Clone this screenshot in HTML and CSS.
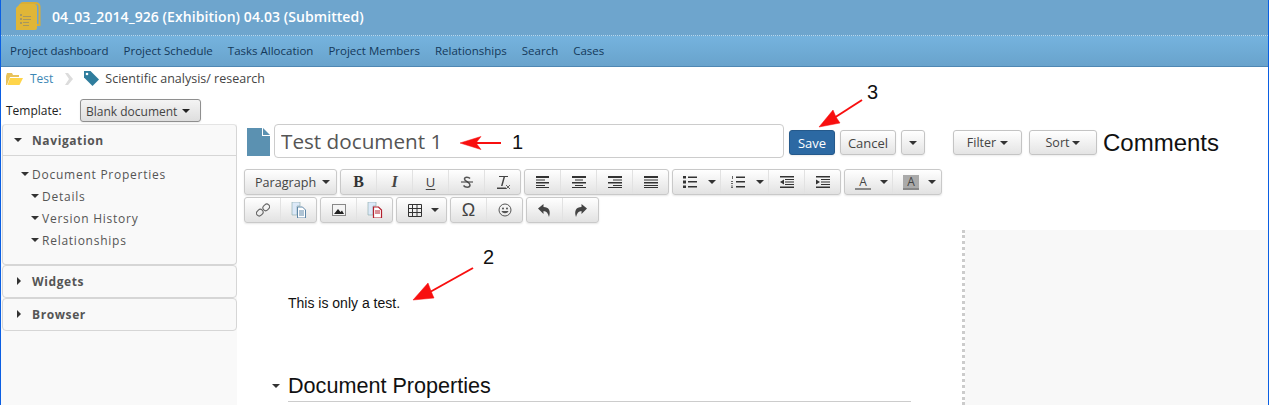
FILE: index.html
```html
<!DOCTYPE html>
<html lang="en">
<head>
<meta charset="utf-8">
<title>Test document 1</title>
<link rel="stylesheet" href="styles.css">
</head>
<body>
<div class="app">
  <header class="head">
    <svg class="logo" width="26" height="30" viewBox="0 0 26 30">
      <path d="M6 3.500 Q6 2 8 2 H20 Q24.500 2 24.500 6 V24 H22" fill="none" stroke="#d9ae35" stroke-width="2"/>
      <path d="M4 5 Q4 4 5 4 H19 Q22 4 22 7 V28 Q22 30 20 30 H6 L1 30 V8 Z" transform="translate(0 -1)" fill="#e0b637"/>
      <path d="M5 13h2v2h-2zM5 17h2v2h-2zM5 21h2v2h-2zM8 15h8v1h-8zM8 18h8v1h-8zM8 21h6v1h-6zM8 24h6v1h-6z" fill="#a8975e"/>
    </svg>
    <span class="head-title">04_03_2014_926 (Exhibition) 04.03 (Submitted)</span>
  </header>
  <nav class="menu">
    <a>Project dashboard</a><a>Project Schedule</a><a>Tasks Allocation</a><a>Project Members</a><a>Relationships</a><a>Search</a><a>Cases</a>
  </nav>
  <div class="crumbs">
    <svg width="17" height="12" viewBox="0 0 17 12"><path d="M0 3 L1 0 H6 L7 2 H13 V4 H4 L1 12 H0 Z" fill="#e8c25a"/><path d="M4 5 H17 L13.500 12 H1.500 Z" fill="#ffd54a"/></svg>
    <a class="crumb-link">Test</a>
    <svg class="crumb-sep" width="9" height="12" viewBox="0 0 9 12"><path d="M1 0 H4 L9 6 L4 12 H1 L5 6 Z" fill="#dcdcdc"/></svg>
    <svg width="15" height="15" viewBox="0 0 15 15"><path d="M0 0 H6.500 L15 8.500 L8.500 15 L0 6.500 Z" fill="#2f7d9d"/><circle cx="3" cy="3" r="1.300" fill="#fff"/></svg>
    <span class="crumb-text">Scientific analysis/ research</span>
  </div>
  <div class="template-row">
    <span class="template-label">Template:</span>
    <button class="btn btn-template">Blank document <i class="caret"></i></button>
  </div>
  <div class="body">
    <aside class="side">
      <section class="panel panel-nav">
        <h3 class="panel-head panel-head-line"><i class="caret caret-dark"></i>Navigation</h3>
        <ul class="tree">
          <li class="tree-root"><i class="caret caret-dark"></i>Document Properties</li>
          <li class="tree-child"><i class="caret caret-dark"></i>Details</li>
          <li class="tree-child"><i class="caret caret-dark"></i>Version History</li>
          <li class="tree-child"><i class="caret caret-dark"></i>Relationships</li>
        </ul>
      </section>
      <section class="panel"><h3 class="panel-head"><i class="caret-right"></i>Widgets</h3></section>
      <section class="panel panel-last"><h3 class="panel-head"><i class="caret-right"></i>Browser</h3></section>
    </aside>
    <main class="main">
      <div class="title-row">
        <svg class="doc-icon" width="23" height="28" viewBox="0 0 23 28"><path d="M0 0 H15 V8 H23 V28 H0 Z" fill="#5b91b1"/><path d="M16 0 L23 7 H16 Z" fill="#5b91b1"/></svg>
        <input class="title-input" value="Test document 1" aria-label="Title">
        <div class="title-actions">
          <button class="btn btn-save">Save</button>
          <button class="btn btn-cancel">Cancel</button>
          <button class="btn btn-more"><i class="caret caret-dark"></i></button>
        </div>
        <div class="comment-actions">
          <button class="btn btn-filter">Filter <i class="caret caret-dark"></i></button>
          <button class="btn btn-sort">Sort <i class="caret caret-dark"></i></button>
          <span class="comments-title">Comments</span>
        </div>
      </div>
      <div class="toolbar">
        <div class="tb-row">
          <div class="tb-group"><button class="tb w93 tb-text">Paragraph <i class="caret caret-dark"></i></button></div>
          <div class="tb-group">
            <button class="tb glyph-b">B</button>
            <button class="tb glyph-i">I</button>
            <button class="tb glyph-u">U</button>
            <button class="tb"><svg width="16" height="16" viewBox="0 0 16 16"><path d="M11 4.500C10 3 5.500 2.500 5.500 5 S11 8 11 11 S6 13.500 4.500 11.500" fill="none" stroke="#555" stroke-width="1.500"/><path d="M2 8h12" stroke="#333"/></svg></button>
            <button class="tb"><svg width="16" height="16" viewBox="0 0 16 16"><path d="M4 2h9v1h-3l-2.500 9h-1.500l2.500-9h-4.500zM2 13.500h9v1.500h-9z" fill="#444"/><path d="M11 11l4 4M15 11l-4 4" stroke="#666"/></svg></button>
          </div>
          <div class="tb-group">
            <button class="tb"><svg width="14" height="12" viewBox="0 0 14 12"><path d="M0 0h13v2h-13zM0 3.500h9v1h-9zM0 6h13v1.500h-13zM0 9h9v1h-9zM0 11h13v1h-13z" fill="#333"/></svg></button>
            <button class="tb"><svg width="14" height="12" viewBox="0 0 14 12"><path d="M0 0h14v2h-14zM3 3.500h8v1h-8zM0 6h14v1.500h-14zM3 9h8v1h-8zM0 11h14v1h-14z" fill="#333"/></svg></button>
            <button class="tb"><svg width="14" height="12" viewBox="0 0 14 12"><path d="M0 0h14v2h-14zM5 3.500h9v1h-9zM0 6h14v1.500h-14zM5 9h9v1h-9zM0 11h14v1h-14z" fill="#333"/></svg></button>
            <button class="tb"><svg width="14" height="12" viewBox="0 0 14 12"><path d="M0 0h14v2h-14zM0 3.500h14v1h-14zM0 6h14v1.500h-14zM0 9h14v1h-14zM0 11h14v1h-14z" fill="#333"/></svg></button>
          </div>
          <div class="tb-group">
            <button class="tb tb-split tb-list"><svg width="14" height="12" viewBox="0 0 14 12"><path d="M0 0h3v2.500h-3zM0 4.500h3v3h-3zM0 9.500h3v2.500h-3z" fill="#333"/><path d="M5 .5h9v1.500h-9zM5 5h9v1.500h-9zM5 10h9v1.500h-9z" fill="#333"/></svg><i class="caret caret-dark"></i></button>
            <button class="tb tb-split tb-list"><svg width="14" height="12" viewBox="0 0 14 12"><path d="M1 0h1v3h-1zM0 5h2v1h-2zM0 7h2v1h-2zM0 9.500h2v1h-2zM0 11h2v1h-2z" fill="#666"/><path d="M5 .5h9v1.500h-9zM5 5h9v1.500h-9zM5 10h9v1.500h-9z" fill="#333"/></svg><i class="caret caret-dark"></i></button>
            <button class="tb"><svg width="14" height="12" viewBox="0 0 14 12"><path d="M0 0h14v1.500h-14zM5 3h9v1h-9zM5 5.500h9v1h-9zM5 8h9v1h-9zM0 10.500h14v1.500h-14zM4 3.500v5l-4-2.500z" fill="#333"/></svg></button>
            <button class="tb"><svg width="14" height="12" viewBox="0 0 14 12"><path d="M0 0h14v1.500h-14zM5 3h9v1h-9zM5 5.500h9v1h-9zM5 8h9v1h-9zM0 10.500h14v1.500h-14zM0 3.500v5l4-2.500z" fill="#333"/></svg></button>
          </div>
          <div class="tb-group">
            <button class="tb tb-split"><span class="color-a">A</span><i class="caret caret-dark"></i></button>
            <button class="tb tb-split"><span class="color-a color-a-bg">A</span><i class="caret caret-dark"></i></button>
          </div>
        </div>
        <div class="tb-row">
          <div class="tb-group">
            <button class="tb"><svg width="14" height="14" viewBox="0 0 14 14"><g fill="none" stroke="#666" stroke-width="1.100"><rect x="7.500" y="0.800" width="5.500" height="7" rx="2.700" transform="rotate(45 10.200 4.300)"/><rect x="1" y="6.200" width="5.500" height="7" rx="2.700" transform="rotate(45 3.800 9.700)"/></g></svg></button>
            <button class="tb"><svg width="16" height="16" viewBox="0 0 16 16"><path d="M1 0h8v4h-3v9h-5z" fill="#dce9f8" stroke="#8aa" stroke-width=".6"/><path d="M6.500 5h5l3 3v8h-8z" fill="#fff" stroke="#5f87a8"/><path d="M8 9h5M8 11h5M8 13h5" stroke="#5f87a8"/></svg></button>
          </div>
          <div class="tb-group">
            <button class="tb"><svg width="14" height="12" viewBox="0 0 14 12"><rect x=".5" y=".5" width="13" height="11" fill="#f4f4f4" stroke="#888"/><path d="M2 10l4-5 2.500 3 1.500-1.500 2 3.500z" fill="#222"/></svg></button>
            <button class="tb"><svg width="16" height="16" viewBox="0 0 16 16"><path d="M1 0h8v4h-3v9h-5z" fill="#dce9f8" stroke="#8aa" stroke-width=".6"/><path d="M6.500 5h5l3 3v8h-8z" fill="#fff" stroke="#b3202e" stroke-width="1.200"/><path d="M8 9h5M8 11h5" stroke="#b3202e"/></svg></button>
          </div>
          <div class="tb-group">
            <button class="tb tb-table"><svg width="14" height="13" viewBox="0 0 14 13"><path d="M.5.5h13v12h-13zM.5 4.500h13M.5 8.500h13M4.500.5v12M9 .5v12" fill="none" stroke="#333"/></svg><i class="caret caret-dark"></i></button>
          </div>
          <div class="tb-group">
            <button class="tb glyph-omega">Ω</button>
            <button class="tb"><svg width="14" height="14" viewBox="0 0 14 14"><circle cx="7" cy="7" r="6" fill="none" stroke="#555"/><circle cx="5" cy="5.500" r=".9" fill="#444"/><circle cx="9" cy="5.500" r=".9" fill="#444"/><path d="M3.500 8c1 3 6 3 7 0z" fill="#555"/></svg></button>
          </div>
          <div class="tb-group">
            <button class="tb"><svg width="13" height="13" viewBox="0 0 13 13"><path d="M0 4.500L5.500 0v3C11 3 13 7 11 13 10 9 8.500 7 5.500 7v3z" fill="#444"/></svg></button>
            <button class="tb"><svg width="13" height="13" viewBox="0 0 13 13"><path d="M13 4.500L7.500 0v3C2 3 0 7 2 13 3 9 4.500 7 7.500 7v3z" fill="#444"/></svg></button>
          </div>
        </div>
      </div>
      <div class="split">
        <article class="editor">
          <p class="editor-text">This is only a test.</p>
          <h2 class="editor-heading"><i class="caret caret-dark"></i>Document Properties</h2>
        </article>
        <div class="comments-pane"></div>
      </div>
    </main>
  </div>
  <svg class="annotations" width="1269" height="405" viewBox="0 0 1269 405">
    <g fill="#f80f0f" stroke="#f80f0f">
      <path d="M501 143H474" stroke-width="2" fill="none"/>
      <path d="M460 143L481 136.500L476 143L481 149.500Z" stroke-width=".5"/>
      <path d="M473 268L430 292" stroke-width="2" fill="none"/>
      <path d="M413 300L428 283L431 291L434 298Z" stroke-width=".5"/>
      <path d="M862 100L834 118" stroke-width="2" fill="none"/>
      <path d="M819 127L833 110L836 117L840 123Z" stroke-width=".5"/>
    </g>
  </svg>
  <span class="mark mark-1">1</span>
  <span class="mark mark-2">2</span>
  <span class="mark mark-3">3</span>
</div>
</body>
</html>
```
FILE: styles.css
```css
* { box-sizing: border-box; }
html, body { margin: 0; padding: 0; background: #fff; }
body { font-family: "Open Sans", "Liberation Sans", sans-serif; font-size: 12px; color: #333; }
.app {
  position: relative;
  width: 1269px;
  height: 405px;
  overflow: hidden;
  border-left: 1px solid #0b5fe3;
  border-right: 1px solid #0b5fe3;
  display: flex;
  flex-direction: column;
}
.head {
  height: 36px;
  flex: none;
  background: #6ea5cd;
  border-bottom: 1px dotted #b9d8ee;
  display: flex;
  align-items: center;
  padding-left: 14px;
}
.logo { flex: none; margin: 0 11px 4px 0; }
.head-title { color: #fff; font-size: 14px; font-weight: 600; letter-spacing: .07px; margin-bottom: 2px; }
.menu {
  height: 31px;
  flex: none;
  background: linear-gradient(#75b3de, #69a3cc);
  border-bottom: 1px solid #4f87b3;
  display: flex;
  align-items: center;
  gap: 15px;
  padding: 0 0 2px 9px;
  color: #14395a;
  font-size: 11.5px;
}
.crumbs {
  height: 23px;
  flex: none;
  display: flex;
  align-items: center;
  padding-left: 5px;
}
.crumb-link { color: #3d87b5; margin-left: 7px; }
.crumb-sep { margin: 0 11px 0 11px; }
.crumb-text { color: #444; margin-left: 6px; font-size: 12.5px; }
.template-row {
  height: 34px;
  flex: none;
  display: flex;
  align-items: flex-start;
  padding: 9px 0 0 5px;
}
.template-label { width: 74px; line-height: 24px; color: #222; }
.btn {
  font: inherit;
  color: #444;
  padding: 0;
  border: 1px solid #c4c4c4;
  border-radius: 3px;
  background: linear-gradient(#fff, #e4e4e4);
  box-shadow: 0 1px 2px rgba(0,0,0,.08);
  height: 25px;
  display: inline-flex;
  align-items: center;
  justify-content: center;
  gap: 4px;
  flex: none;
}
.btn-template {
  width: 121px;
  height: 23px;
  border-color: #8f8f8f;
  background: linear-gradient(#f4f4f4, #dedede);
  justify-content: flex-start;
  padding: 1px 0 0 5px;
  gap: 5px;
}
.caret {
  display: inline-block;
  width: 0;
  height: 0;
  border-left: 4px solid transparent;
  border-right: 4px solid transparent;
  border-top: 4px solid #222;
}
.caret-dark { border-top-color: #333; }
.caret-right {
  display: inline-block;
  width: 0;
  height: 0;
  border-top: 4px solid transparent;
  border-bottom: 4px solid transparent;
  border-left: 4px solid #333;
}
.body { flex: 1; min-height: 0; display: flex; }
.side {
  width: 236px;
  flex: none;
  background: #f9f9f9;
  padding: 0 0 0 1px;
  display: flex;
  flex-direction: column;
}
.panel { border: 1px solid #d6d6d6; border-radius: 4px; }
.panel-nav { height: 141px; border-top-color: #e4e4e4; }
.panel + .panel { margin-top: 0; height: 33px; }
.panel-last { height: 32px; }
.panel-head {
  margin: 0;
  height: 30px;
  display: flex;
  align-items: center;
  padding-left: 11px;
  font-size: 12px;
  font-weight: 700;
  letter-spacing: .6px;
  color: #555;
}
.panel-head .caret { margin-right: 10px; }
.panel-head .caret-right { margin: 0 11px 0 3px; }
.panel-head-line { height: 31px; border-bottom: 1px solid #d6d6d6; }
.tree { list-style: none; margin: 0; padding: 7px 0 0; }
.tree li { height: 22px; display: flex; align-items: center; font-size: 12px; letter-spacing: .75px; color: #555; }
.tree-root { padding-left: 18px; }
.tree-child { padding-left: 28px; }
.tree .caret { margin-right: 3px; }
.main { flex: 1; min-width: 0; display: flex; flex-direction: column; }
.title-row { height: 45px; flex: none; display: flex; align-items: flex-start; padding-left: 10px; }
.doc-icon { margin: 4px 4px 0 0; flex: none; }
.title-input {
  width: 510px;
  height: 34px;
  border: 1px solid #ccc;
  border-radius: 4px;
  padding: 0 6px;
  font: 20.7px "Open Sans", sans-serif;
  color: #555;
  background: #fff;
}
.title-actions { display: flex; gap: 5px; margin: 6px 0 0 5px; }
.btn-save { width: 46px; color: #fff; background: #2c69a3; border-color: #25598b; font-size: 13px; }
.btn-cancel { width: 56px; font-size: 13px; }
.btn-more { width: 24px; }
.comment-actions { display: flex; margin: 6px 0 0 28px; }
.btn-filter { width: 69px; margin-right: 7px; font-size: 12.5px; }
.btn-sort { width: 68px; margin-right: 6px; gap: 3px; font-size: 12.5px; }
.comments-title { font: 24px "Liberation Sans", sans-serif; color: #111; line-height: 25px; }
.toolbar { flex: none; height: 61px; padding-left: 7px; display: flex; flex-direction: column; gap: 2px; }
.tb-row { display: flex; gap: 3px; height: 26px; }
.tb-group {
  display: flex;
  border: 1px solid #c9c9c9;
  border-radius: 3px;
  background: linear-gradient(#fff, #e2e2e2);
  box-shadow: 0 1px 2px rgba(0,0,0,.1);
}
.tb {
  width: 36px;
  height: 24px;
  padding: 0;
  border: 0;
  border-right: 1px solid #e2e2e2;
  background: none;
  display: flex;
  align-items: center;
  justify-content: center;
  gap: 7px;
  font: inherit;
  color: #333;
}
.tb:last-child { border-right: 0; width: 35px; }
.tb.tb-split { width: 48px; justify-content: flex-start; padding-left: 10px; gap: 9px; }
.tb.tb-list { gap: 11px; }
.tb.tb-table { width: 49px; justify-content: flex-start; padding-left: 11px; gap: 9px; }
.tb.w93 { width: 91px; justify-content: flex-start; padding-left: 10px; }
.tb-text { gap: 6px; color: #444; font-size: 12.6px; }
.glyph-b { font: 700 16px "Liberation Serif", serif; }
.glyph-i { font: italic 700 16px "Liberation Serif", serif; color: #444; }
.glyph-u { font-size: 13px; text-decoration: underline; text-underline-offset: 2px; color: #444; }
.glyph-omega { font: 18px "Liberation Sans", sans-serif; color: #444; }
.color-a {
  display: block;
  width: 16px;
  height: 15px;
  line-height: 13px;
  font-size: 12px;
  text-align: center;
  border-bottom: 2px solid #888;
  color: #444;
}
.color-a-bg { background: #aaa; }
.split { flex: 1; min-height: 0; display: flex; }
.editor { width: 728px; flex: none; border-right: 3px dotted #ccc; padding: 65px 0 0 51px; position: relative; }
.editor-text { margin: 0; font: 14px/16px "Liberation Sans", sans-serif; color: #111; }
.editor-heading {
  margin: 62px 0 0;
  padding-bottom: 2px;
  width: 623px;
  border-bottom: 1px solid #ccc;
  font: 400 21.6px/26px "Liberation Sans", sans-serif;
  color: #111;
  position: relative;
}
.editor-heading .caret { position: absolute; left: -16px; top: 11px; }
.comments-pane { flex: 1; background: #f8f8f8; }
.annotations { position: absolute; left: -1px; top: 0; pointer-events: none; }
.mark { position: absolute; font: 20px/22px "Liberation Sans", sans-serif; color: #111; }
.mark-1 { left: 511px; top: 131px; }
.mark-2 { left: 482px; top: 246px; }
.mark-3 { left: 866px; top: 81px; }
```
